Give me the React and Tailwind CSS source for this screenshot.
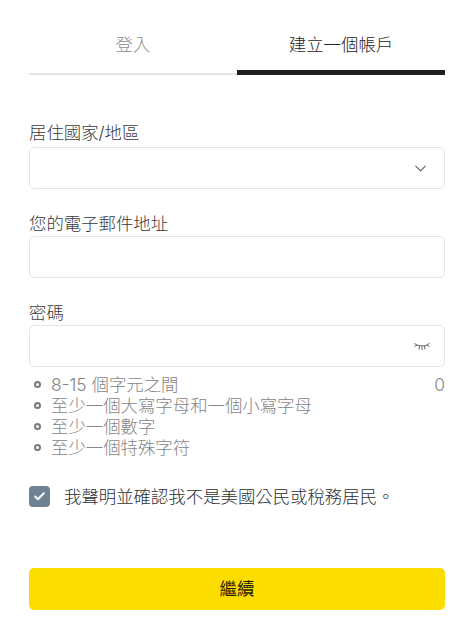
import React from "react";
import { ChevronDown, Check } from "lucide-react";

const font = "font-['Inter','Noto_Sans_CJK_TC',sans-serif]";

function ClosedEye() {
  return (
    <svg width="16" height="10" viewBox="0 0 16 10" fill="none" stroke="#5f6368" strokeWidth="1" className="mt-[2px]">
      <path d="M0.5 1.5 L3 3 C6 4.2 10 4.2 13 3 L15.5 1" />
      <path d="M0.5 4.5 L3 3 M13 3 L15.5 4.5 M5.5 4 L5 7.5 M8 4.2 L8 8 M10.5 4 L11 7.5" />
    </svg>
  );
}

function Field({ label, icon, first }) {
  return (
    <div>
      <label className={`block text-[17.4px] leading-[24px] text-[#3a3a3a] font-light ${first ? "mb-[2px]" : ""}`}>{label}</label>
      <div className="flex h-[42px] items-center justify-end rounded-[5px] border border-[#e6e6e6] bg-white pr-[14px]">
        {icon}
      </div>
    </div>
  );
}

export default function App() {
  const rules = ["8-15 個字元之間", "至少一個大寫字母和一個小寫字母", "至少一個數字", "至少一個特殊字符"];

  return (
    <div className={`${font} min-h-[633px] w-[470px] bg-white pl-[29px] pr-[25px] pt-[30px]`}>
      {/* tabs */}
      <div className="flex items-end">
        <div className="flex h-[45px] flex-1 justify-center border-b-2 border-[#e3e3e3] text-[17.4px] font-light leading-[30px] text-[#8c8c8c]">
          登入
        </div>
        <div className="flex h-[45px] flex-1 justify-center border-b-[5px] border-[#1b1f1f] text-[17.4px] font-light leading-[30px] text-[#1f2326]">
          建立一個帳戶
        </div>
      </div>

      <div className="mt-[46px] flex flex-col gap-[23px]">
        <Field first label="居住國家/地區" icon={<ChevronDown size={19} strokeWidth={1.5} className="text-[#5f6368]" />} />
        <Field label="您的電子郵件地址" />
        <Field label="密碼" icon={<ClosedEye />} />
      </div>

      <div className="mt-[7px] flex justify-between text-[17.4px] font-light leading-[21px] text-[#858585]">
        <ul>
          {rules.map((rule) => (
            <li key={rule} className="flex items-center">
              <span className="ml-[5px] mr-[10px] h-[7px] w-[7px] rounded-full border-2 border-[#77797c]" />
              {rule}
            </li>
          ))}
        </ul>
        <span>0</span>
      </div>

      <div className="mt-[28px] flex items-start">
        <span className="flex h-[21px] w-[21px] items-center justify-center rounded-[4px] bg-[#6f8294]">
          <Check size={13} strokeWidth={3.5} className="text-white" />
        </span>
        <span className="ml-[14px] text-[17.4px] font-light leading-[21px] text-[#2b2f33]">
          我聲明並確認我不是美國公民或稅務居民。
        </span>
      </div>

      <button className="mt-[61px] h-[42px] w-full rounded-[5px] bg-[#fcdd00] text-[17.4px] text-[#1f1c00]">繼續</button>
    </div>
  );
}
